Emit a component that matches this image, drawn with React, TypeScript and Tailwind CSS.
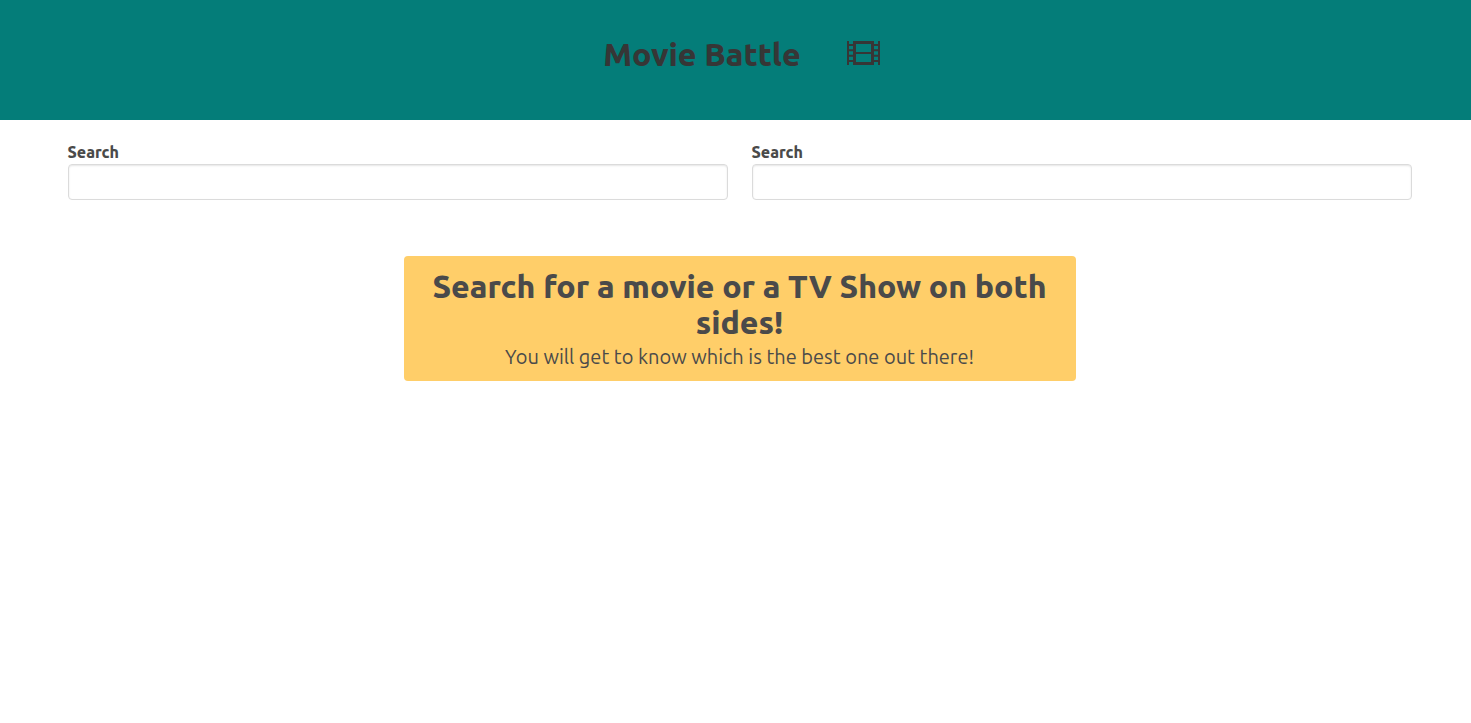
function FilmIcon() {
  return (
    <svg width="33" height="24" viewBox="0 0 33 24" fill="#363636" aria-hidden="true">
      <path fillRule="evenodd" d="M6 0h21v24H6zM9 3v8h15V3zM9 13v8h15v-8z" />
      <path d="M0 0h2v3h4v2H2v3.3h4v2H2v3.4h4v2H2V19h4v2H2v3H0z" />
      <path d="M33 0h-2v3h-4v2h4v3.3h-4v2h4v3.4h-4v2h4V19h-4v2h4v3h2z" />
    </svg>
  );
}

function SearchField({ id }: { id: string }) {
  return (
    <div className="min-w-0 flex-1">
      <label htmlFor={id} className="block text-base leading-6 font-extrabold">
        Search
      </label>
      <input
        id={id}
        type="text"
        className="block h-9 w-full rounded border border-[#dbdbdb] bg-white px-3 text-base shadow-[inset_0_1px_2px_rgba(10,10,10,0.1)] outline-none focus:border-[#3273dc]"
      />
    </div>
  );
}

export default function App() {
  return (
    <div className="min-h-screen bg-white font-['Ubuntu','Noto_Sans',sans-serif] text-[#4a4a4a]">
      <header className="flex h-30 justify-center bg-[#047d79] pt-9 pl-3">
        <h1 className="flex items-start gap-[46px] text-[32px] leading-9 font-extrabold text-[#363636]">
          Movie Battle
          <span className="pt-[5px]">
            <FilmIcon />
          </span>
        </h1>
      </header>
      <main className="pt-5 pl-2">
        <div className="mx-auto max-w-[1344px]">
          <div className="flex gap-6">
            <SearchField id="left-search" />
            <SearchField id="right-search" />
          </div>
          <section className="mx-auto mt-14 w-1/2 rounded bg-[#ffce69] px-3.5 py-3 text-center">
            <h2 className="text-[32px] leading-9 font-extrabold">
              Search for a movie or a TV Show on both sides!
            </h2>
            <p className="pt-1 text-xl leading-[25px]">
              You will get to know which is the best one out there!
            </p>
          </section>
        </div>
      </main>
    </div>
  );
}
